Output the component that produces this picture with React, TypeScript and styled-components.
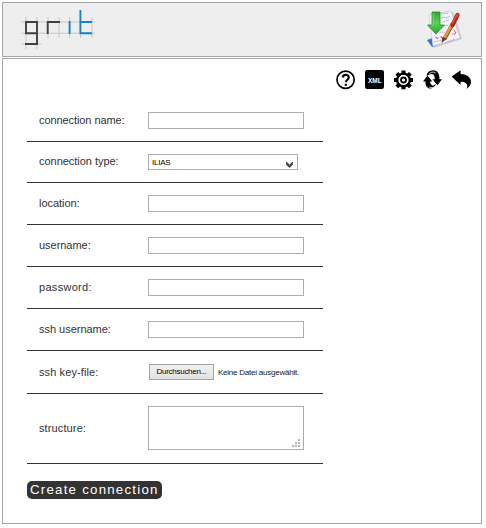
import React from "react";
import styled, { createGlobalStyle } from "styled-components";

const GlobalStyle = createGlobalStyle`
  * { box-sizing: border-box; }
  body { margin: 0; background: #fff; font-family: "Liberation Sans", Arial, sans-serif; color: #333; }
`;

const Page = styled.div`
  display: flex;
  flex-direction: column;
  gap: 1px;
  width: 482px;
  padding: 2px 0 0 2px;
`;
const Header = styled.header`
  display: flex;
  justify-content: space-between;
  height: 55px;
  border: 1px solid #a5a5a5;
  background: #eee;
`;
const Logo = styled.svg`
  width: 80px;
  height: 46px;
  margin: 3px 0 0 15px;
`;
const ImportIcon = styled.svg`
  width: 42px;
  height: 44px;
  margin: 4px 17px 0 0;
`;
const Panel = styled.main`
  height: 466px;
  border: 1px solid #a5a5a5;
  padding: 11px 9px 0 24px;
`;
const Toolbar = styled.nav`
  display: flex;
  justify-content: flex-end;
  gap: 9px;
  height: 20px;
`;
const Icon = styled.svg`
  width: 20px;
  height: 20px;
  display: block;
`;
const Form = styled.form`
  width: 296px;
  padding-top: 10px;
`;
const Row = styled.div<{ $height?: number }>`
  display: grid;
  grid-template-columns: 109px 1fr;
  align-items: center;
  height: ${(p) => p.$height ?? 42}px;
  padding-left: 12px;
  border-bottom: 1px solid #333;
`;
const Label = styled.label<{ $spacing?: number; $drop?: number }>`
  font-size: 11px;
  line-height: 14px;
  padding-bottom: ${(p) => p.$drop ?? 2}px;
  letter-spacing: ${(p) => p.$spacing ?? 0}px;
  white-space: nowrap;
`;
const Input = styled.input`
  width: 156px;
  height: 17px;
  padding: 0 3px;
  border: 1px solid #abadb3;
  background: #fff;
  font-size: 9px;
`;
const Select = styled.div`
  display: flex;
  align-items: center;
  justify-content: space-between;
  width: 150px;
  height: 16px;
  padding: 0 4px 0 3px;
  border: 1px solid #abadb3;
  color: #000;
  font-size: 8px;
  letter-spacing: -0.25px;
`;
const Chevron = styled.svg`
  width: 7px;
  height: 6px;
  margin-top: 5px;
`;
const FilePicker = styled.div`
  display: flex;
  align-items: center;
  gap: 4px;
  padding-left: 1px;
`;
const FileButton = styled.button`
  width: 65px;
  height: 16px;
  padding: 0;
  border: 1px solid #a5a5a5;
  background: linear-gradient(#f1f1f1, #e2e2e2);
  color: #000;
  font: 8px/14px "Liberation Sans", Arial, sans-serif;
  letter-spacing: -0.27px;
`;
const FileName = styled.span`
  color: #222;
  font-size: 8px;
  letter-spacing: -0.23px;
  white-space: nowrap;
`;
const TextBox = styled.div`
  display: flex;
  align-items: flex-end;
  justify-content: flex-end;
  width: 156px;
  height: 44px;
  margin-bottom: 1px;
  padding: 2px 3px;
  border: 1px solid #abadb3;
`;
const Grip = styled.svg`
  width: 8px;
  height: 8px;
`;
const Submit = styled.button`
  display: block;
  width: 135px;
  height: 18px;
  margin-top: 17px;
  padding: 0 0 0 3px;
  border: 0;
  border-radius: 5px;
  background: #333;
  color: #fff;
  font: 13.3px/18px "Liberation Sans", Arial, sans-serif;
  letter-spacing: 1.22px;
  text-align: left;
  white-space: nowrap;
`;

const TextField = ({ label, spacing }: { label: string; spacing?: number }) => (
  <Row>
    <Label $spacing={spacing}>{label}</Label>
    <Input aria-label={label} />
  </Row>
);

export default function App() {
  return (
    <>
      <GlobalStyle />
      <Page>
        <Header>
          <Logo viewBox="18 6 80 46" fill="none" aria-label="grit">
            <path d="M21 22H95M21 33.2H95M21 44H41.5M26 17V49M37 17V49M48 17V38M59 17V38M69.7 17V38M80.5 17V38M92 17V38" stroke="#c6c6c6" />
            <path d="M37 33.2H26V22H37V44H25M47.7 34V22H60" stroke="#404040" strokeWidth="1.9" />
            <path d="M69.6 21V34M80.4 10V33.2H92M80.4 22H92" stroke="#1681c8" strokeWidth="1.9" />
          </Logo>
          <ImportIcon viewBox="422 7 42 44">
            <defs>
              <linearGradient id="arrow" x2="0" y2="1">
                <stop stopColor="#2daa2e" />
                <stop offset=".5" stopColor="#58d357" />
                <stop offset="1" stopColor="#25a52c" />
              </linearGradient>
            </defs>
            <path d="M427 40l5 7 8-3-5-7z" fill="#3974c4" />
            <path d="M430 14l20-3 4 2 8 26-29 9z" fill="#aeb4bd" opacity=".6" />
            <path d="M429 15l22-4 9 27-27 8z" fill="#f5f5fc" stroke="#c8c9d4" strokeWidth=".6" />
            <path d="M441 14l8-1M441 18l3-1 2 1 4-2M443 22l6-2M443 26l5-1" stroke="#9d9de2" strokeWidth=".9" fill="none" strokeDasharray="2 .7" />
            <path d="M437 38l5-1 3 1M452 34l4-1M447 42l8-3M434 42l8-2M439 33l6-1" stroke="#e58d91" strokeWidth=".8" strokeDasharray="2 .7" fill="none" />
            <path d="M435 37l3 2M441 36l2 4M454 30l2 3M454 35l2-3" stroke="#e7585e" />
            <path d="M444.5 39l8-15" stroke="#76583a" strokeWidth="3.8" />
            <path d="M444.5 38l8-15" stroke="#ef9435" strokeWidth="2.8" />
            <path d="M441.5 43l1-6 4 2z" fill="#5b3b30" />
            <path d="M452.5 25l5-10" stroke="#b52319" strokeWidth="4.2" strokeLinecap="round" />
            <path d="M452.5 23l5-8" stroke="#e94a2c" strokeWidth="2.2" strokeLinecap="round" />
            <path d="M453 27l4-10" stroke="#62302a" strokeWidth=".8" />
            <path d="M432 12h8v13h4.5l-8.5 9-8.5-9h4.5z" fill="url(#arrow)" stroke="#248e2a" strokeWidth=".8" />
            <path d="M433.2 13v12h-2" fill="none" stroke="#84df7b" strokeWidth=".8" />
          </ImportIcon>
        </Header>
        <Panel>
          <Toolbar>
            <Icon viewBox="0 0 20 20" aria-label="Help">
              <circle cx="9.6" cy="9.8" r="8.6" fill="none" stroke="#000" strokeWidth="1.7" />
              <path d="M6.7 7.5C7 4 12.8 4 12.8 7.2c0 2.5-3 2.5-3 5.1" fill="none" stroke="#000" strokeWidth="2.1" />
              <path d="M8.7 13.8h2.3v2H8.7z" />
            </Icon>
            <Icon viewBox="0 0 20 20" aria-label="XML">
              <rect width="19" height="19" rx="2.2" />
              <text x="3" y="12.8" textLength="13.6" lengthAdjust="spacingAndGlyphs" fill="#fff" fontFamily="Liberation Sans, Arial, sans-serif" fontWeight="700" fontSize="7.5">XML</text>
            </Icon>
            <Icon viewBox="0 0 20 20" aria-label="Settings">
              <circle cx="9.5" cy="10" r="6.2" fill="none" stroke="#000" strokeWidth="2.6" />
              <g stroke="#000" strokeWidth="4">
                <path d="M9.5.6V4M9.5 16v3.2M0 10h3M16 10h3" />
                <path d="M2.8 3.3l2.4 2.4M14 14.5l2.4 2.4M16.4 3.3L14 5.7M5.2 14.5l-2.4 2.4" />
              </g>
              <circle cx="9.5" cy="10" r="5" fill="#fff" />
              <circle cx="9.5" cy="10" r="2.5" fill="none" stroke="#000" strokeWidth="1.8" />
            </Icon>
            <Icon viewBox="0 0 20 20" aria-label="Refresh">
              <path d="M0 11.5L4.5 5.5l4.8 6H7c0 2 1 3.3 3 4.2l3-1.7c-1.5 3.5-4 5-7.5 4.3C3 17 2.3 14.5 2.5 11.5z" />
              <path d="M9.5 9.2l4.9 6 4.6-6h-2.5C16.5 3 14 0 9 .4 5.6.8 3.8 3 3.6 5.9l3-1.4c3.4-1.5 5.2.4 5.2 4.7z" />
              <path d="M6 4.3C7.5 2 10 1.5 12.5 2.8M12.7 15.4c-1.5 2.3-4 2.9-6.4 1.7" fill="none" stroke="#fff" strokeWidth=".8" />
            </Icon>
            <Icon viewBox="0 0 20 20" aria-label="Back">
              <path d="M-.5 6.6L8.6.2v3.7C15.5 4.3 19.2 8 19 12c-.1 3-1.8 5.3-4.7 6.9 2.5-3.8.3-7.2-5.7-7.2v3.2z" />
            </Icon>
          </Toolbar>
          <Form onSubmit={(e) => e.preventDefault()}>
            <TextField label="connection name:" spacing={-0.08} />
            <Row $height={41}>
              <Label $spacing={-0.03}>connection type:</Label>
              <Select role="combobox" aria-expanded="false">
                <span>ILIAS</span>
                <Chevron viewBox="0 0 7 6">
                  <path d="M0 0h1l2.5 2.5L6 0h1v2.8L3.5 6 0 2.8z" fill="#505050" />
                </Chevron>
              </Select>
            </Row>
            <TextField label="location:" spacing={-0.03} />
            <TextField label="username:" spacing={-0.03} />
            <TextField label="password:" spacing={0.3} />
            <TextField label="ssh username:" spacing={-0.02} />
            <Row $height={43}>
              <Label $spacing={0.1} $drop={0}>ssh key-file:</Label>
              <FilePicker>
                <FileButton type="button">Durchsuchen...</FileButton>
                <FileName>Keine Datei ausgewählt.</FileName>
              </FilePicker>
            </Row>
            <Row $height={70}>
              <Label $spacing={0.12}>structure:</Label>
              <TextBox role="textbox">
                <Grip viewBox="0 0 8 8" fill="#b8b8b8">
                  <path d="M6 0h2v2H6zM3 3h2v2H3zM6 3h2v2H6zM0 6h2v2H0zM3 6h2v2H3zM6 6h2v2H6z" />
                </Grip>
              </TextBox>
            </Row>
            <Submit type="submit">Create connection</Submit>
          </Form>
        </Panel>
      </Page>
    </>
  );
}
